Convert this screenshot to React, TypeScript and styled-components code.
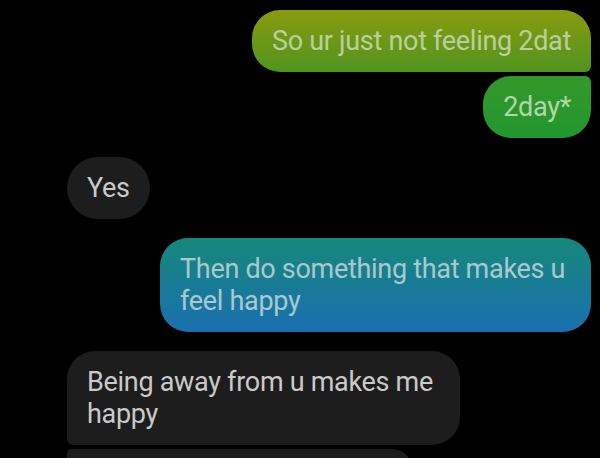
import React from "react";
import styled, { createGlobalStyle } from "styled-components";

const GlobalStyle = createGlobalStyle`
  html, body {
    margin: 0;
    padding: 0;
    background: #000;
    overflow: hidden;
  }
`;

const Thread = styled.div`
  display: flex;
  flex-direction: column;
  height: 458px;
  padding: 10px 9px 0 67px;
  box-sizing: border-box;
  background: #000;
  font-family: Roboto, "Noto Sans", sans-serif;
  overflow: hidden;
`;

const Group = styled.div<{ $out?: boolean }>`
  display: flex;
  flex-direction: column;
  align-items: ${(p) => (p.$out ? "flex-end" : "flex-start")};
  gap: 4px;
  margin-bottom: 19px;
`;

type Tone = "olive" | "green" | "blue" | "gray";

const backgrounds: Record<Tone, string> = {
  olive: "linear-gradient(180deg, #8a9a0e 0%, #4f9520 100%)",
  green: "linear-gradient(180deg, #34982a 0%, #22962f 100%)",
  blue: "linear-gradient(180deg, #16887a 0%, #1a6fb0 100%)",
  gray: "#1d1d1d",
};

const textColors: Record<Tone, string> = {
  olive: "#b9d09c",
  green: "#b3d6a6",
  blue: "#a9c9cf",
  gray: "#cacaca",
};

const Bubble = styled.div<{ $tone: Tone; $radius: string; $max?: number }>`
  box-sizing: border-box;
  max-width: ${(p) => (p.$max ? `${p.$max}px` : "none")};
  padding: 15px 20px;
  border-radius: ${(p) => p.$radius};
  background: ${(p) => backgrounds[p.$tone]};
  color: ${(p) => textColors[p.$tone]};
  font-size: 27px;
  line-height: 32px;
  letter-spacing: -0.3px;
`;

// next message, only its top edge shows at the bottom of the screen
const PeekBubble = styled.div`
  width: 345px;
  height: 40px;
  flex-shrink: 0;
  border-radius: 6px 28px 28px 28px;
  background: #1d1d1d;
`;

export default function App() {
  return (
    <>
      <GlobalStyle />
      <Thread>
        <Group $out>
          <Bubble $tone="olive" $radius="28px 28px 6px 28px">
            So ur just not feeling 2dat
          </Bubble>
          <Bubble $tone="green" $radius="28px 6px 28px 28px">
            2day*
          </Bubble>
        </Group>
        <Group>
          <Bubble $tone="gray" $radius="31px">
            Yes
          </Bubble>
        </Group>
        <Group $out>
          <Bubble $tone="blue" $radius="28px" $max={431}>
            Then do something that makes u feel happy
          </Bubble>
        </Group>
        <Group>
          <Bubble $tone="gray" $radius="28px 28px 28px 6px" $max={393}>
            Being away from u makes me happy
          </Bubble>
          <PeekBubble />
        </Group>
      </Thread>
    </>
  );
}
